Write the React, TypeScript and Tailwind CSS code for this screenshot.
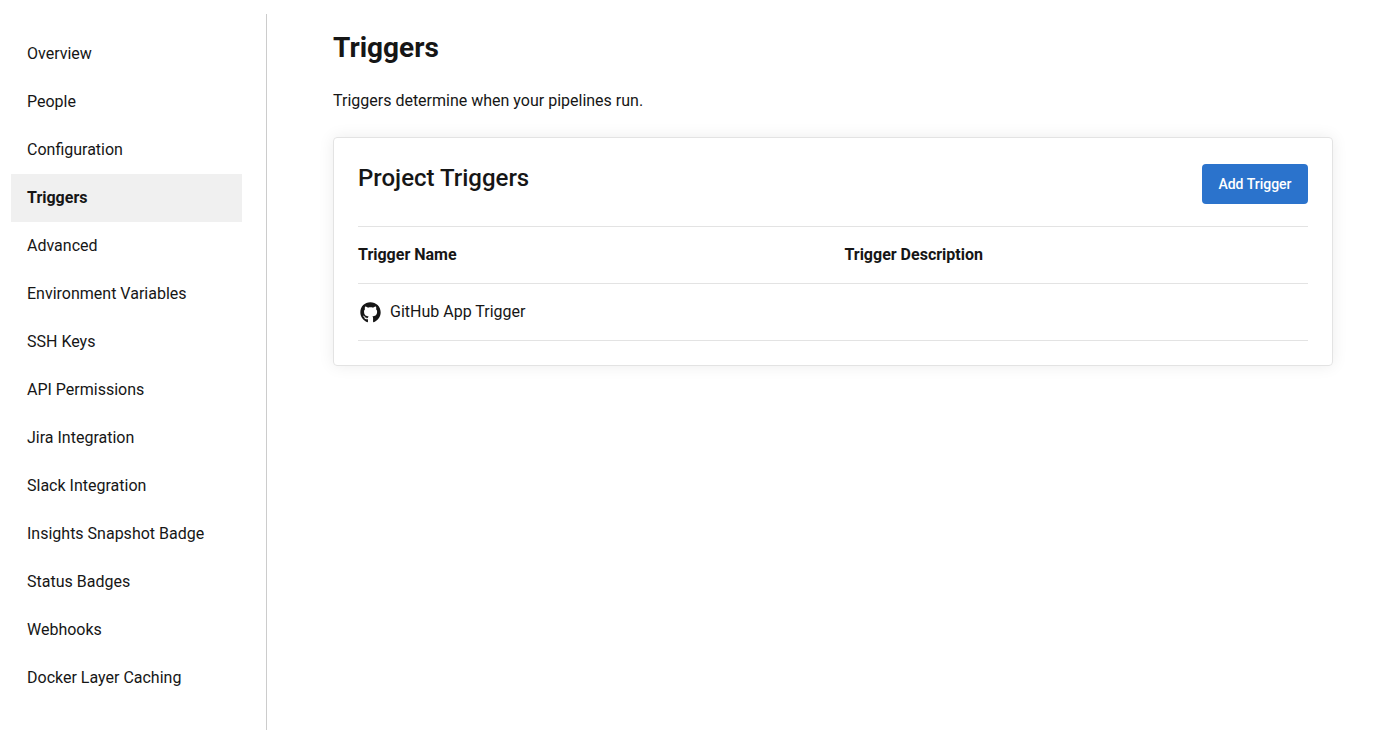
import { FaGithub } from "react-icons/fa";

const items = [
  "Overview",
  "People",
  "Configuration",
  "Triggers",
  "Advanced",
  "Environment Variables",
  "SSH Keys",
  "API Permissions",
  "Jira Integration",
  "Slack Integration",
  "Insights Snapshot Badge",
  "Status Badges",
  "Webhooks",
  "Docker Layer Caching",
];

export default function App() {
  return (
    <div className="flex min-h-screen bg-white pt-3.5 font-['Roboto',sans-serif] text-base text-[#161616]">
      <nav aria-label="Project settings" className="w-[267px] shrink-0 border-r border-[#cccccc] pt-4 pr-6 pb-7 pl-[11px]">
        <ul>
          {items.map((item) => (
            <li key={item}>
              <a
                href="#"
                aria-current={item === "Triggers" ? "page" : undefined}
                className="block h-12 px-4 leading-[48px] aria-[current=page]:bg-[#f0f0f0] aria-[current=page]:font-bold"
              >
                {item}
              </a>
            </li>
          ))}
        </ul>
      </nav>
      <main className="min-w-0 flex-1 pt-[17px] pr-[41px] pl-[66px]">
        <h1 className="text-[28px] leading-[34px] font-bold">Triggers</h1>
        <p className="mt-6 leading-6">Triggers determine when your pipelines run.</p>
        <section className="mt-6 rounded border border-[#e3e3e3] px-6 pt-[26px] pb-6 shadow-[0_0_16px_rgba(0,0,0,0.08)]">
          <div className="flex items-start justify-between pb-[22px]">
            <h2 className="text-2xl leading-7 font-medium">Project Triggers</h2>
            <button type="button" className="h-10 min-w-[106px] rounded bg-[#2b73cc] px-4 text-sm font-medium text-white">
              Add Trigger
            </button>
          </div>
          <table className="w-full table-fixed border-t border-[#e3e3e3] text-left">
            <thead>
              <tr className="h-[57px] border-b border-[#e3e3e3]">
                <th scope="col" className="w-[51.2%] font-bold">Trigger Name</th>
                <th scope="col" className="font-bold">Trigger Description</th>
              </tr>
            </thead>
            <tbody>
              <tr className="h-[57px] border-b border-[#e3e3e3]">
                <td>
                  <div className="flex items-center gap-2">
                    <span className="flex size-6 items-center justify-center">
                      <FaGithub size={21} aria-hidden="true" />
                    </span>
                    <span>GitHub App Trigger</span>
                  </div>
                </td>
                <td></td>
              </tr>
            </tbody>
          </table>
        </section>
      </main>
    </div>
  );
}
